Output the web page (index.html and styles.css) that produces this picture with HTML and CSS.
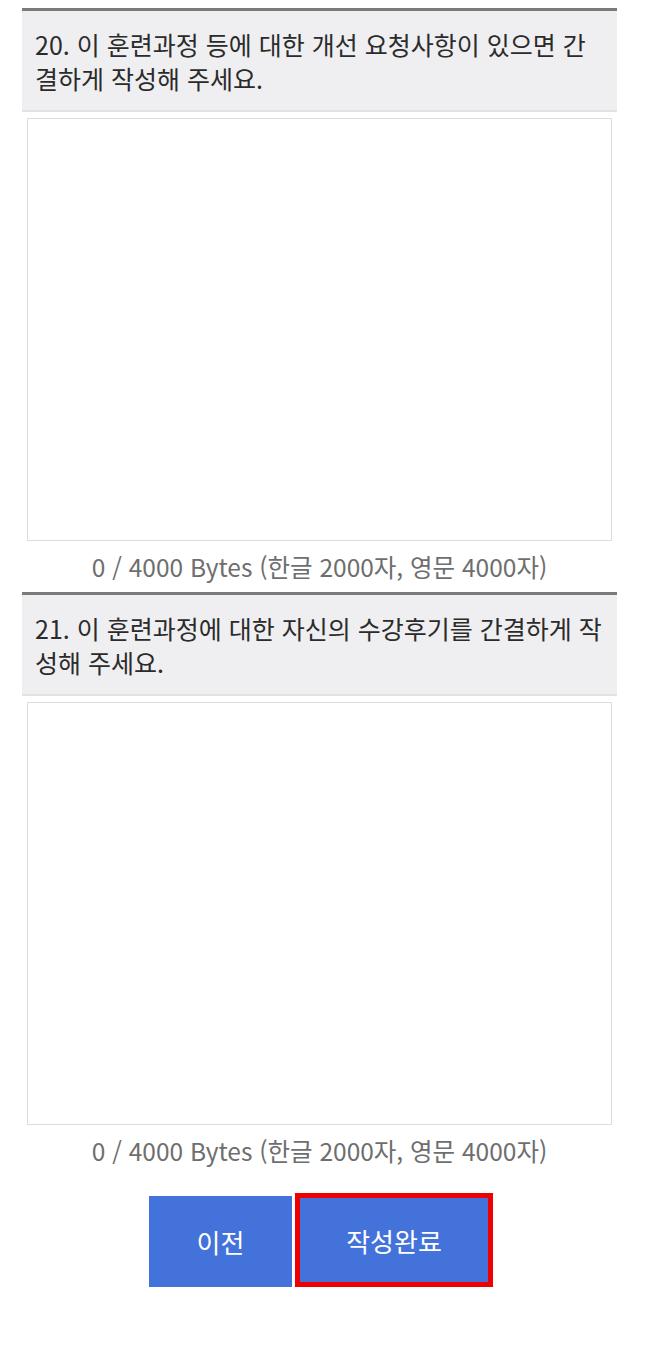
FILE: index.html
```html
<!DOCTYPE html>
<html lang="ko">
<head>
<meta charset="utf-8">
<title>설문</title>
<link rel="stylesheet" href="styles.css">
</head>
<body>
<div class="page">
  <section class="item">
    <div class="question">20. 이 훈련과정 등에 대한 개선 요청사항이 있으면 간결하게 작성해 주세요.</div>
    <textarea class="answer"></textarea>
    <p class="counter">0 / 4000 Bytes (한글 2000자, 영문 4000자)</p>
  </section>
  <section class="item">
    <div class="question">21. 이 훈련과정에 대한 자신의 수강후기를 간결하게 작성해 주세요.</div>
    <textarea class="answer"></textarea>
    <p class="counter">0 / 4000 Bytes (한글 2000자, 영문 4000자)</p>
  </section>
  <div class="buttons">
    <button class="btn btn-prev" type="button">이전</button>
    <button class="btn btn-done" type="button">작성완료</button>
  </div>
</div>
</body>
</html>
```

FILE: styles.css
```css
* { box-sizing: border-box; }
html, body { margin: 0; padding: 0; background: #fff; }
body {
  font-family: "Noto Sans CJK KR", "Noto Sans", sans-serif;
  color: #333;
}
.page {
  width: 595px;
  margin-left: 22px;
  padding-top: 8px;
}
.item {
  display: flex;
  flex-direction: column;
  align-items: center;
}
.question {
  width: 100%;
  border-top: 3px solid #7a7a7a;
  border-bottom: 2px solid #e2e2e4;
  background: #efeff1;
  padding: 16px 14px 15px 13px;
  font-size: 25px;
  line-height: 34px;
  color: #2b2b2b;
}
.answer {
  display: block;
  width: 585px;
  height: 423px;
  margin-top: 6px;
  border: 1px solid #dcdcdc;
  background: #fff;
  resize: none;
  outline: none;
}
.counter {
  margin: 9px 0 8px;
  font-size: 24.5px;
  line-height: 34px;
  color: #6e6e6e;
  text-align: center;
}
.buttons {
  display: flex;
  justify-content: center;
  align-items: flex-end;
  gap: 3px;
  padding-left: 3px;
  margin-top: 17px;
}
.btn {
  border: 0;
  background: #4472db;
  color: #fff;
  font-family: "Noto Sans CJK KR", "Noto Sans", sans-serif;
  font-size: 26px;
  padding: 0;
  margin: 0;
}
.btn-prev {
  width: 143px;
  height: 91px;
}
.btn-done {
  width: 198px;
  height: 94px;
  border: 5px solid #ee0000;
}
```
